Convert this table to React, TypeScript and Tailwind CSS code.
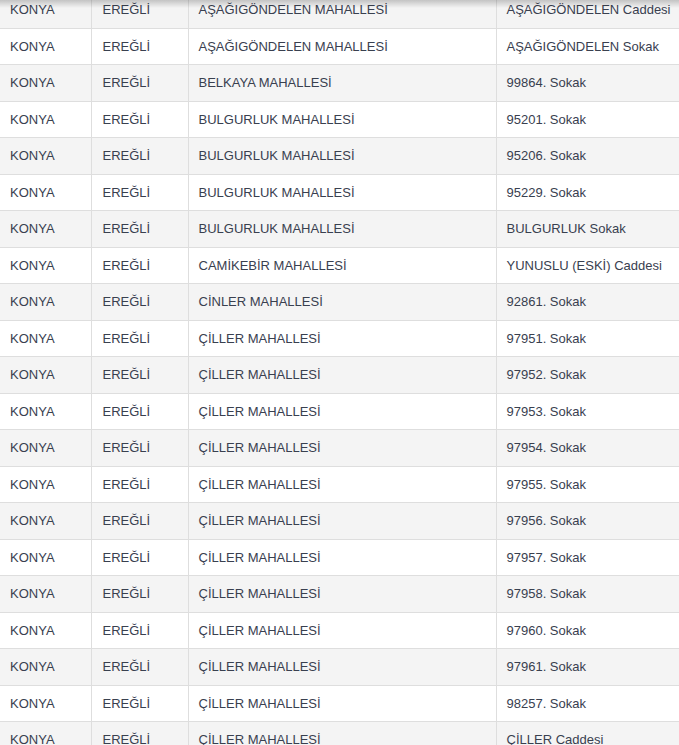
import React from 'react';

const rows: [string, string][] = [
  ['AŞAĞIGÖNDELEN MAHALLESİ', 'AŞAĞIGÖNDELEN Caddesi'],
  ['AŞAĞIGÖNDELEN MAHALLESİ', 'AŞAĞIGÖNDELEN Sokak'],
  ['BELKAYA MAHALLESİ', '99864. Sokak'],
  ['BULGURLUK MAHALLESİ', '95201. Sokak'],
  ['BULGURLUK MAHALLESİ', '95206. Sokak'],
  ['BULGURLUK MAHALLESİ', '95229. Sokak'],
  ['BULGURLUK MAHALLESİ', 'BULGURLUK Sokak'],
  ['CAMİKEBİR MAHALLESİ', 'YUNUSLU (ESKİ) Caddesi'],
  ['CİNLER MAHALLESİ', '92861. Sokak'],
  ['ÇİLLER MAHALLESİ', '97951. Sokak'],
  ['ÇİLLER MAHALLESİ', '97952. Sokak'],
  ['ÇİLLER MAHALLESİ', '97953. Sokak'],
  ['ÇİLLER MAHALLESİ', '97954. Sokak'],
  ['ÇİLLER MAHALLESİ', '97955. Sokak'],
  ['ÇİLLER MAHALLESİ', '97956. Sokak'],
  ['ÇİLLER MAHALLESİ', '97957. Sokak'],
  ['ÇİLLER MAHALLESİ', '97958. Sokak'],
  ['ÇİLLER MAHALLESİ', '97960. Sokak'],
  ['ÇİLLER MAHALLESİ', '97961. Sokak'],
  ['ÇİLLER MAHALLESİ', '98257. Sokak'],
  ['ÇİLLER MAHALLESİ', 'ÇİLLER Caddesi'],
];

export default function App() {
  return (
    <div className="relative h-[745px] overflow-hidden bg-white font-['Liberation_Sans',Arial,sans-serif] text-[13px] text-[#39404f]">
      {/* gölge: üstteki sabit başlık */}
      <div className="pointer-events-none absolute inset-x-0 top-0 z-10 h-[8px] bg-gradient-to-b from-black/20 to-transparent" />
      <table className="-mt-[9px] w-full table-fixed border-collapse">
        <colgroup>
          <col className="w-[91px]" />
          <col className="w-[97px]" />
          <col className="w-[308px]" />
          <col />
        </colgroup>
        <tbody>
          {rows.map(([mahalle, sokak], i) => (
            <tr key={i} className={i % 2 === 0 ? 'bg-[#f4f4f4]' : 'bg-white'}>
              <td className="border-t border-[#dedede] pl-[10px] py-2 leading-[19.5px] whitespace-nowrap">KONYA</td>
              <td className="border-t border-l border-[#dedede] pl-[11px] py-2 leading-[19.5px] whitespace-nowrap">EREĞLİ</td>
              <td className="border-t border-l border-[#dedede] pl-[10px] py-2 leading-[19.5px] whitespace-nowrap">{mahalle}</td>
              <td className="border-t border-l border-[#dedede] pl-[10px] py-2 leading-[19.5px] whitespace-nowrap">{sokak}</td>
            </tr>
          ))}
        </tbody>
      </table>
    </div>
  );
}
